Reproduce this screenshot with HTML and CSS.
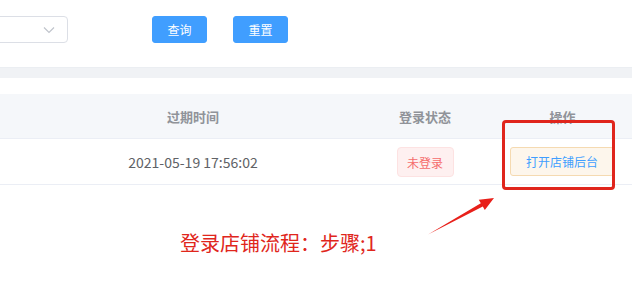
FILE: index.html
```html
<!doctype html>
<html>
  <head>
    <meta charset="utf-8">
    <title>店铺列表</title>
    <link rel="stylesheet" href="styles.css">
  </head>
  <body>
    <div class="search">
      <div class="select">
        <svg class="arrow-down" width="12" height="8" viewBox="0 0 12 8"><path d="M1 1.5 L6 6.5 L11 1.5" fill="none" stroke="#c0c4cc" stroke-width="1.2"/></svg>
      </div>
      <button class="btn primary query">查询</button>
      <button class="btn primary">重置</button>
    </div>

    <div class="band"></div>

    <div class="table">
      <div class="row head">
        <div class="cell"></div>
        <div class="cell">过期时间</div>
        <div class="cell">登录状态</div>
        <div class="cell">操作</div>
      </div>
      <div class="row">
        <div class="cell"></div>
        <div class="cell">2021-05-19 17:56:02</div>
        <div class="cell"><span class="tag">未登录</span></div>
        <div class="cell ops"><button class="btn open">打开店铺后台</button></div>
      </div>
    </div>

    <!-- annotation -->
    <div class="mark"></div>
    <svg class="pointer" width="632" height="287" viewBox="0 0 632 287">
      <polygon points="428,234.5 480.8,203.2 478.8,199.7 494,198 484.8,210.1 482.8,206.6" fill="#e8201a"/>
    </svg>
    <div class="caption">登录店铺流程：步骤;1</div>
  </body>
</html>
```
FILE: styles.css
```css
body {
  margin: 0;
  background: #fff;
  font-family: "Noto Sans CJK SC", "Noto Sans", sans-serif;
  position: relative;
  width: 632px;
  height: 287px;
  overflow: hidden;
}

.search {
  display: flex;
  align-items: center;
  padding-top: 16px;
  height: 27px;
}

.select {
  width: 67px;
  height: 25px;
  margin-left: -13px;
  border: 1px solid #dcdfe6;
  border-radius: 4px;
  display: flex;
  align-items: center;
  justify-content: flex-end;
  padding-right: 12px;
  box-sizing: content-box;
}

.arrow-down {
  display: block;
}

.btn {
  font-family: inherit;
  font-size: 12px;
  border-radius: 3px;
  cursor: pointer;
}

.primary {
  width: 55px;
  height: 27px;
  background: #409eff;
  border: 1px solid #409eff;
  color: #fff;
  padding: 0;
}

.query {
  margin-left: 84px;
  margin-right: 26px;
}

.band {
  margin-top: 24px;
  height: 10px;
  background: #f0f2f5;
  border-top: 1px solid #ebeef2;
}

.table {
  margin-top: 16px;
}

.row {
  display: grid;
  grid-template-columns: 29px 328px 136px 139px;
  height: 45px;
  border-bottom: 1px solid #ebeef5;
  font-size: 14px;
  color: #606266;
}

.head {
  height: 44px;
  background: #f5f7fa;
  color: #909399;
  font-size: 13px;
  font-weight: bold;
}

.cell {
  display: flex;
  align-items: center;
  justify-content: center;
}

.ops {
  justify-content: flex-start;
  padding-left: 17px;
}

.tag {
  display: inline-block;
  width: 57px;
  height: 30px;
  line-height: 30px;
  text-align: center;
  box-sizing: border-box;
  background: #fef0f0;
  border: 1px solid #fde2e2;
  border-radius: 4px;
  color: #f56c6c;
  font-size: 12px;
}

.open {
  width: 104px;
  height: 29px;
  padding: 0;
  background: #fdf6ec;
  border: 1px solid #f5dab1;
  color: #409eff;
}

.mark {
  position: absolute;
  left: 502px;
  top: 120px;
  width: 107px;
  height: 64px;
  border: 3px solid #e0251c;
  border-radius: 4px;
}

.pointer {
  position: absolute;
  left: 0;
  top: 0;
}

.caption {
  position: absolute;
  left: 180px;
  top: 228px;
  font-size: 20px;
  color: #e0261c;
  white-space: nowrap;
}
```
